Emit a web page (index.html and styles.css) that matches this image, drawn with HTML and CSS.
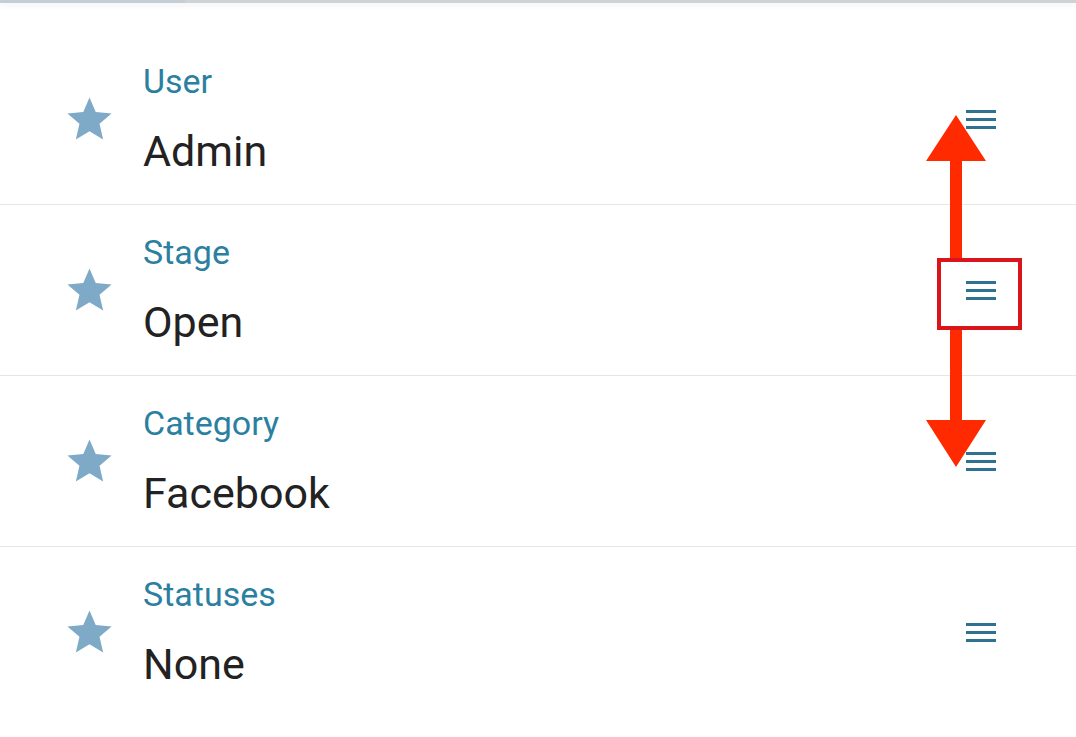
FILE: index.html
```html
<!DOCTYPE html>
<html lang="en">

<head>
    <meta charset="UTF-8">
    <meta name="viewport" content="width=device-width, initial-scale=1.0">
    <title>Fields</title>
    <link rel="stylesheet" href="styles.css">
</head>

<body>
    <div class="topbar"><span class="tab-line"></span></div>

    <ul class="field-list">
        <li class="field-row">
            <div class="star-cell">
                <svg class="star" viewBox="0 0 24 24"><path d="M12 17.27L18.18 21l-1.64-7.03L22 9.24l-7.19-.61L12 2 9.19 8.63 2 9.24l5.46 4.73L5.82 21z" /></svg>
            </div>
            <div class="field-text">
                <div class="field-label">User</div>
                <div class="field-value">Admin</div>
            </div>
            <svg class="handle" viewBox="0 0 30 20"><rect x="0" y="0" width="30" height="3" /><rect x="0" y="8" width="30" height="3" /><rect x="0" y="16" width="30" height="3" /></svg>
        </li>
        <li class="field-row">
            <div class="star-cell">
                <svg class="star" viewBox="0 0 24 24"><path d="M12 17.27L18.18 21l-1.64-7.03L22 9.24l-7.19-.61L12 2 9.19 8.63 2 9.24l5.46 4.73L5.82 21z" /></svg>
            </div>
            <div class="field-text">
                <div class="field-label">Stage</div>
                <div class="field-value">Open</div>
            </div>
            <svg class="handle" viewBox="0 0 30 20"><rect x="0" y="0" width="30" height="3" /><rect x="0" y="8" width="30" height="3" /><rect x="0" y="16" width="30" height="3" /></svg>
        </li>
        <li class="field-row">
            <div class="star-cell">
                <svg class="star" viewBox="0 0 24 24"><path d="M12 17.27L18.18 21l-1.64-7.03L22 9.24l-7.19-.61L12 2 9.19 8.63 2 9.24l5.46 4.73L5.82 21z" /></svg>
            </div>
            <div class="field-text">
                <div class="field-label">Category</div>
                <div class="field-value">Facebook</div>
            </div>
            <svg class="handle" viewBox="0 0 30 20"><rect x="0" y="0" width="30" height="3" /><rect x="0" y="8" width="30" height="3" /><rect x="0" y="16" width="30" height="3" /></svg>
        </li>
        <li class="field-row">
            <div class="star-cell">
                <svg class="star" viewBox="0 0 24 24"><path d="M12 17.27L18.18 21l-1.64-7.03L22 9.24l-7.19-.61L12 2 9.19 8.63 2 9.24l5.46 4.73L5.82 21z" /></svg>
            </div>
            <div class="field-text">
                <div class="field-label">Statuses</div>
                <div class="field-value">None</div>
            </div>
            <svg class="handle" viewBox="0 0 30 20"><rect x="0" y="0" width="30" height="3" /><rect x="0" y="8" width="30" height="3" /><rect x="0" y="16" width="30" height="3" /></svg>
        </li>
    </ul>

    <!-- annotation: drag handle moves the row up/down -->
    <svg class="annotation" viewBox="0 0 1076 737">
        <polygon class="arrow" points="956,115 986,161 962,161 962,258 950,258 950,161 926,161" />
        <polygon class="arrow" points="950,330 962,330 962,420 986,420 956,467 926,420 950,420" />
        <rect class="focus-box" x="939" y="260" width="81" height="68" />
    </svg>
</body>

</html>
```

FILE: styles.css
```css
body {
    font-family: 'Roboto', 'Liberation Sans', sans-serif;
    margin: 0;
    padding: 0;
    background-color: #fff;
    position: relative;
    height: 737px;
    overflow: hidden;
}

.topbar {
    height: 3px;
    background-color: #cfd2d4;
    box-shadow: 0 2px 6px rgba(0, 0, 0, 0.08);
    position: relative;
}

.tab-line {
    display: block;
    width: 185px;
    height: 3px;
    background-color: #c3ced6;
}

.field-list {
    list-style: none;
    margin: 31px 0 0 0;
    padding: 0;
}

.field-row {
    display: flex;
    align-items: center;
    height: 170px;
    border-bottom: 1px solid #e6e6e6;
    padding-right: 80px;
}

.field-row:last-child {
    border-bottom: none;
}

.star-cell {
    width: 143px;
    display: flex;
    justify-content: flex-start;
    flex-shrink: 0;
}

.star {
    width: 53px;
    height: 53px;
    margin-left: 63px;
    fill: #7ea9c7;
}

.field-text {
    flex: 1;
    display: flex;
    flex-direction: column;
    gap: 24px;
}

.field-label {
    font-size: 34px;
    line-height: 40px;
    color: #2b7fa1;
}

.field-value {
    font-size: 43px;
    line-height: 52px;
    color: #222;
}

.handle {
    width: 30px;
    height: 20px;
    fill: #2f7190;
    margin-top: 2px;
}

.annotation {
    position: absolute;
    top: 0;
    left: 0;
    width: 1076px;
    height: 737px;
    pointer-events: none;
}

.arrow {
    fill: #ff2a00;
}

.focus-box {
    fill: none;
    stroke: #d9151b;
    stroke-width: 4;
}
```
